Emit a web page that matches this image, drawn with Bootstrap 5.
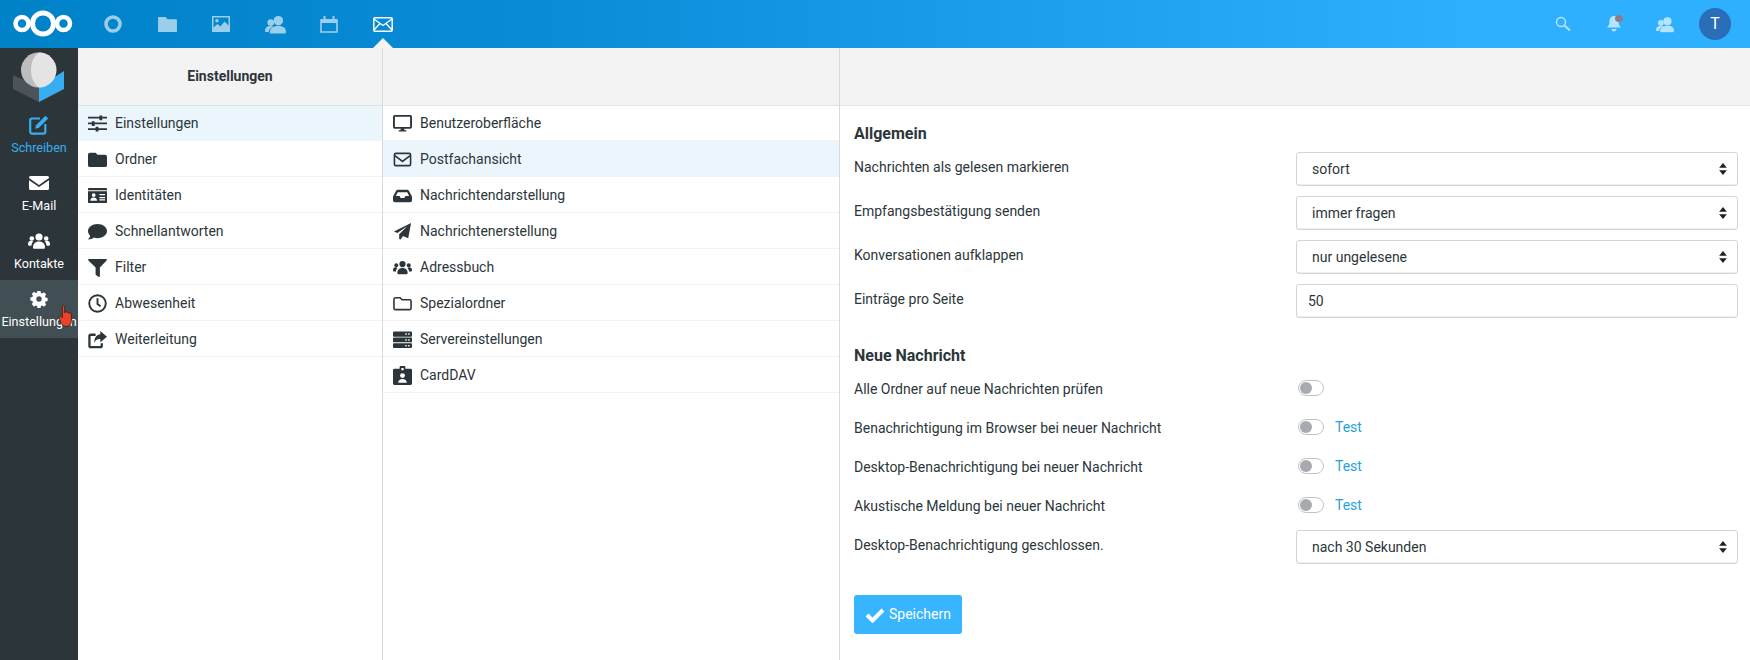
<!DOCTYPE html>
<html lang="de">
<head>
  <meta charset="UTF-8" />
  <title>Einstellungen - Mail</title>
  <link href="https://cdn.jsdelivr.net/npm/bootstrap@5.3.0/dist/css/bootstrap.min.css" rel="stylesheet">
  <style>
    html, body { height: 100%; }
    body { font-family: Roboto, "Liberation Sans", sans-serif; font-size: 14px; color: #2c363a; overflow: hidden; background: #fff; }
    .topbar { height: 48px; background: linear-gradient(90deg, #0082c9 0%, #0a8bd6 30%, #2eb0ff 85%, #2eb0ff 100%); }
    .top-logo { width: 78px; padding-left: 12px; }
    .top-apps { gap: 0; margin-left: 8px; }
    .top-app { width: 54px; height: 48px; display: flex; align-items: center; justify-content: center; color: #fff; opacity: .6; position: relative; }
    .top-app.is-on { opacity: 1; }
    .top-caret { position: absolute; left: 50%; bottom: 0; margin-left: -10px; border: 10px solid transparent; border-top: 0; border-bottom-color: #f4f4f4; }
    .top-right { gap: 0; padding-right: 19px; }
    .top-tool { width: 51px; display: flex; justify-content: center; color: #fff; opacity: .65; position: relative; }
    .bell-dot { position: absolute; left: 27px; top: -1px; width: 8px; height: 7px; border-radius: 50%; background: #c0614f; }
    .avatar { width: 32px; height: 32px; border-radius: 50%; background: #2a6eb8; color: #fff; font-size: 16px; display: flex; align-items: center; justify-content: center; margin-left: 9px; }
    .app-main { height: 612px; }
    .side-task { width: 78px; background: #2c363a; flex: none; overflow: hidden; position: relative; }
    .side-logo { height: 58px; display: flex; justify-content: center; padding-top: 3px; }
    .side-item { height: 58px; display: flex; flex-direction: column; align-items: center; padding-top: 9px; color: #fff; font-size: 12.6px; white-space: nowrap; text-decoration: none; }
    .side-item svg { margin-bottom: 4px; }
    .side-item.is-compose { color: #37aef0; }
    .side-item.is-active { background: #414e53; padding-top: 10px; }
    .side-item.is-active svg { margin-bottom: 5px; }
    .hand-cursor { position: absolute; left: 58px; top: 257px; }
    .pane-one { width: 305px; }
    .pane-two { width: 457px; }
    .pane-one, .pane-two { flex: none; border-right: 1px solid #d4dae0; }
    .pane-three { flex: 1; min-width: 0; }
    .pane-head { height: 58px; background: #f3f3f3; border-bottom: 1px solid #dfe3e6; display: flex; align-items: center; justify-content: center; font-weight: 700; padding-bottom: 1px; }
    .list-item { height: 36px; display: flex; align-items: center; padding: 2px 0 0 10px; border-bottom: 1px solid #f2f2f2; color: #2c363a; text-decoration: none; }
    .list-item:first-child { height: 35px; padding-top: 0; }
    .list-item.is-on { background: #ebf6fc; border-bottom-color: #ebf6fc; }
    .list-ico { width: 19px; height: 19px; margin-right: 8px; flex: none; color: #2c363a; }
    .form-pane { padding: 18px 12px 0 14px; }
    .form-head { font-size: 16px; font-weight: 700; line-height: 20px; }
    .new-head { margin-top: 28px; margin-bottom: 2px; }
    .form-line { display: flex; justify-content: space-between; margin-bottom: 10px; }
    .form-line > label { padding-top: 5px; line-height: 20px; }
    .select-after { margin-top: 6px; }
    .form-field { width: 442px; flex: none; }
    .form-field .form-select, .form-field .form-control { height: 34px; font-size: 14px; color: #2c363a; border: 1px solid #d4d4d4; border-radius: 3px; box-shadow: inset 0 -1px 0 #eee; }
    .form-field .form-select { padding: 4px 30px 4px 15px; background-size: 8px 12px; background-position: right 10px center;
      background-image: url("data:image/svg+xml,%3csvg xmlns='http://www.w3.org/2000/svg' viewBox='0 0 9 14'%3e%3cpath fill='%23222' d='M4.5 0 9 5.5H0zM4.5 14 0 8.500h9z'/%3e%3c/svg%3e"); }
    .form-field .form-control { padding: 4px 11px; }
    .switch-line { height: 39px; display: flex; align-items: center; justify-content: space-between; }
    .switch-line > label { padding-top: 3px; }
    .switch-line .form-switch { padding: 0; min-height: 0; margin: 0; display: flex; align-items: center; }
    .switch-line .form-check-input { width: 26px; height: 16px; margin: 0 0 0 2px; float: none; border: 1px solid #c3c3c3; box-shadow: none;
      background-size: 14px 14px; background-position: left center; background-image: url("data:image/svg+xml,%3csvg xmlns='http://www.w3.org/2000/svg' viewBox='0 0 14 14'%3e%3ccircle cx='7' cy='7' r='6' fill='%23a7abb0'/%3e%3c/svg%3e"); }
    .test-link { color: #1fa4d8; text-decoration: none; margin-left: 11px; padding-top: 1px; }
    .save-btn { width: 108px; height: 39px; margin-top: 31px; padding: 0; background: #37b5ff; border: 0; border-radius: 3px; color: #fff; font-size: 14px; display: flex; align-items: center; justify-content: center; gap: 4px; }
  </style>
</head>
<body>
  <svg width="0" height="0" class="d-none">
    <symbol id="i-sliders" viewBox="0 0 20 20"><path fill="currentColor" d="M0 3h20v1.800H0zM0 9h20v1.800H0zM0 15h20v1.800H0z"/><path fill="currentColor" d="M12 1.500h3v5h-3zM4 7.500h3v5H4zM8 13.500h3v5H8z"/></symbol>
    <symbol id="i-folder" viewBox="0 0 20 20"><path fill="currentColor" d="M2 3h6l2 2h8a2 2 0 0 1 2 2v9a2 2 0 0 1-2 2H2a2 2 0 0 1-2-2V5a2 2 0 0 1 2-2z"/></symbol>
    <symbol id="i-card" viewBox="0 0 20 20"><path fill="currentColor" fill-rule="evenodd" d="M1 2h18a1 1 0 0 1 1 1v14a1 1 0 0 1-1 1H1a1 1 0 0 1-1-1V3a1 1 0 0 1 1-1zM0 4.500v1h20v-1zM6 7.500a2 2 0 1 0 0 4 2 2 0 0 0 0-4zM2.500 15.500h7c0-2-1.500-3.300-3.500-3.300s-3.500 1.300-3.500 3.300zM12 8.500v1.300h6V8.500zM12 11.500v1.300h6v-1.300zM12 14v1.300h6V14z"/></symbol>
    <symbol id="i-comment" viewBox="0 0 20 20"><path fill="currentColor" d="M10 2c5.500 0 10 3.400 10 7.500S15.500 17 10 17c-1.300 0-2.500-.2-3.700-.6C5 17.500 2.800 18.500 0 18.500c1.300-1.300 2-2.700 2.300-4C.8 13 0 11.300 0 9.500 0 5.400 4.500 2 10 2z"/></symbol>
    <symbol id="i-filter" viewBox="0 0 20 20"><path fill="currentColor" d="M1 1h18c.8 0 1.200 1 .6 1.600L12.500 10v9.300c0 .6-.6.900-1.100.6L8 17.500V10L.4 2.600C-.2 2 .2 1 1 1z"/></symbol>
    <symbol id="i-clock" viewBox="0 0 20 20"><circle cx="10" cy="10" r="8.700" fill="none" stroke="currentColor" stroke-width="2"/><path fill="none" stroke="currentColor" stroke-width="2" d="M10 4.500V10.500l3.200 2.500"/></symbol>
    <symbol id="i-share" viewBox="0 0 20 20"><path fill="none" stroke="currentColor" stroke-width="2.400" d="M8 5H3a1.500 1.500 0 0 0-1.500 1.500v10A1.500 1.500 0 0 0 3 18h10a1.500 1.500 0 0 0 1.500-1.500V14"/><path fill="currentColor" d="M13 1l7 6-7 6V9.500c-3.500 0-5.500 1-6 4.500-1-5 1.500-9 6-9.500z"/></symbol>
    <symbol id="i-desktop" viewBox="0 0 20 20"><path fill="none" stroke="currentColor" stroke-width="2" d="M1.800 2h16.400a.8.800 0 0 1 .8.800v11a.8.800 0 0 1-.8.800H1.800a.8.800 0 0 1-.8-.8v-11a.8.800 0 0 1 .8-.8z"/><path fill="currentColor" d="M8 15h4v2h2v1.500H6V17h2z"/></symbol>
    <symbol id="i-mail-o" viewBox="0 0 20 20"><rect x="1.500" y="3.500" width="17" height="13" rx="1.500" fill="none" stroke="currentColor" stroke-width="1.700"/><path fill="none" stroke="currentColor" stroke-width="1.700" d="M2 6l8 6 8-6"/></symbol>
    <symbol id="i-inbox" viewBox="0 0 20 20"><path fill="currentColor" fill-rule="evenodd" d="M5 4h10c.7 0 1.300.3 1.700 1L20 11v4a2 2 0 0 1-2 2H2a2 2 0 0 1-2-2v-4l3.300-6c.4-.7 1-1 1.700-1zM5 6.500 3 10.500h4l1 2h4l1-2h4l-2-4z"/></symbol>
    <symbol id="i-plane" viewBox="0 0 20 20"><path fill="currentColor" d="M19 1l-3 16-5.500-2.300L8 18.500l-1.500-.5v-5L15 4.500 4.500 11.500 1 10z"/></symbol>
    <symbol id="i-users" viewBox="0 0 22 20"><circle cx="11" cy="6" r="3.600" fill="currentColor"/><circle cx="3.800" cy="7.500" r="2.300" fill="currentColor"/><circle cx="18.200" cy="7.500" r="2.300" fill="currentColor"/><path fill="currentColor" d="M5 16.500c0-3.500 2-6 6-6s6 2.500 6 6c0 .8-.6 1.300-1.300 1.300H6.300C5.600 17.800 5 17.300 5 16.500zM0 13c0-2 1-3.300 3-3.300 1 0 1.700.3 2.300.8-1 1-1.800 2.500-1.900 4.200H1c-.6 0-1-.5-1-1.700zM22 13c0-2-1-3.300-3-3.300-1 0-1.700.3-2.300.8 1 1 1.800 2.500 1.900 4.200H21c.6 0 1-.5 1-1.700z"/></symbol>
    <symbol id="i-folder-o" viewBox="0 0 20 20"><path fill="none" stroke="currentColor" stroke-width="1.700" d="M2.500 4h5l2 2h8a1.500 1.500 0 0 1 1.500 1.500V15a1.500 1.500 0 0 1-1.500 1.500h-15A1.500 1.500 0 0 1 1 15V5.500A1.500 1.500 0 0 1 2.500 4z"/></symbol>
    <symbol id="i-server" viewBox="0 0 20 20"><path fill="currentColor" fill-rule="evenodd" d="M1 1.500h18a1 1 0 0 1 1 1v3.500a1 1 0 0 1-1 1H1a1 1 0 0 1-1-1V2.500a1 1 0 0 1 1-1zM1 8h18a1 1 0 0 1 1 1v3a1 1 0 0 1-1 1H1a1 1 0 0 1-1-1V9a1 1 0 0 1 1-1zM1 14h18a1 1 0 0 1 1 1v3a1 1 0 0 1-1 1H1a1 1 0 0 1-1-1v-3a1 1 0 0 1 1-1zM13 3.500v1.500h1.500V3.500zM16 3.500v1.500h1.500V3.500zM13 9.800v1.500h1.500V9.800zM16 9.800v1.500h1.500V9.800zM13 15.800v1.500h1.500v-1.500zM16 15.800v1.500h1.500v-1.500z"/></symbol>
    <symbol id="i-badge" viewBox="0 0 20 20"><path fill="currentColor" fill-rule="evenodd" d="M1.500 3H7V1.200C7 .5 7.500 0 8.200 0h3.600C12.500 0 13 .5 13 1.200V3h5.500A1.500 1.500 0 0 1 20 4.500v14a1.500 1.500 0 0 1-1.500 1.500h-17A1.500 1.500 0 0 1 0 18.500v-14A1.500 1.500 0 0 1 1.500 3zM10 7.500a2.600 2.600 0 1 0 0 5.200 2.600 2.600 0 0 0 0-5.200zM5.500 17.500h9c0-2.500-2-3.800-4.500-3.800s-4.500 1.300-4.500 3.800zM8.800 2v2.500h2.400V2z"/></symbol>
    <symbol id="i-contacts" viewBox="0 0 22 20"><circle cx="14" cy="6" r="5" fill="currentColor"/><circle cx="6" cy="8" r="3.500" fill="currentColor"/><path fill="currentColor" d="M5 19c0-5 3-7.500 9-7.500s8 2.500 8 6c0 1-.5 2-1.500 2H6c-.5 0-1 0-1-.5zM0 17c0-3.500 2-5.500 6-5.500 1 0 2 .2 2.500.5C5.500 13.500 4 15.500 3.800 18H1c-.6 0-1-.4-1-1z"/></symbol>
  </svg>

  <nav class="topbar d-flex align-items-center justify-content-between">
    <div class="d-flex align-items-center">
      <a class="top-logo d-block" href="#">
        <svg width="62" height="28" viewBox="0 0 62 28" class="d-block">
          <g fill="none" stroke="#fff"><circle cx="10" cy="13.500" r="6.500" stroke-width="4.500"/><circle cx="31" cy="13.500" r="10.500" stroke-width="5"/><circle cx="51.500" cy="13.500" r="6.500" stroke-width="4.500"/></g>
        </svg>
      </a>
      <div class="top-apps d-flex">
        <a class="top-app" href="#"><svg width="18" height="18" viewBox="0 0 18 18"><circle cx="9" cy="9" r="7" fill="none" stroke="currentColor" stroke-width="3.600"/></svg></a>
        <a class="top-app" href="#"><svg width="19" height="17" viewBox="0 0 20 18"><path fill="currentColor" d="M1 1h7l2 2.500h9a1 1 0 0 1 1 1V17H0V2a1 1 0 0 1 1-1z"/></svg></a>
        <a class="top-app" href="#"><svg width="18" height="16" viewBox="0 0 18 16"><path fill="currentColor" fill-rule="evenodd" d="M0 0h18v16H0zM1.500 1.500v10l4-3.500 3 2.500 4-5 4 4v-8zM5 3a1.800 1.800 0 1 1 0 3.600A1.800 1.800 0 0 1 5 3z"/></svg></a>
        <a class="top-app" href="#"><svg width="21" height="19" viewBox="0 0 22 20"><use href="#i-contacts"/></svg></a>
        <a class="top-app" href="#"><svg width="18" height="18" viewBox="0 0 18 18"><path fill="none" stroke="currentColor" stroke-width="1.600" d="M1 5h16v12H1z"/><path fill="currentColor" d="M1 4h16v4H1zM3.500 1h2v4h-2zM12.500 1h2v4h-2z"/></svg></a>
        <a class="top-app is-on" href="#"><svg width="20" height="15" viewBox="0 0 20 15"><rect x=".8" y=".8" width="18.400" height="13.400" rx="1" fill="none" stroke="currentColor" stroke-width="1.500"/><path fill="none" stroke="currentColor" stroke-width="1.300" d="M1 2l9 6.500L19 2M1 13l6-6.500M19 13l-6-6.500"/></svg><span class="top-caret"></span></a>
      </div>
    </div>
    <div class="top-right d-flex align-items-center">
      <a class="top-tool" href="#"><svg width="16" height="16" viewBox="0 0 16 16"><circle cx="6" cy="6" r="4.500" fill="none" stroke="currentColor" stroke-width="1.500"/><path stroke="currentColor" stroke-width="2" d="M9.500 9.500l5.500 5"/></svg></a>
      <a class="top-tool" href="#"><svg width="14" height="16" viewBox="0 0 14 16"><path fill="currentColor" d="M7 0c3 0 4.500 2.500 4.500 5.500 0 3 1 4.500 2.500 6H0c1.500-1.500 2.500-3 2.500-6C2.500 2.500 4 0 7 0zM4.500 13h5c0 1.500-1 2.500-2.500 2.500S4.500 14.500 4.500 13z"/></svg><span class="bell-dot"></span></a>
      <a class="top-tool" href="#"><svg width="18" height="17" viewBox="0 0 22 20"><use href="#i-contacts"/></svg></a>
      <div class="avatar">T</div>
    </div>
  </nav>

  <div class="app-main d-flex">
    <aside class="side-task">
      <div class="side-logo">
        <svg width="52" height="52" viewBox="0 0 52 52">
          <path fill="#4a5459" d="M0 24l26 12v15L0 38z"/>
          <path fill="#37aef0" d="M51 20L26 36v15l25-13z"/>
          <circle cx="25.500" cy="19" r="17.500" fill="#bdbdbd"/>
          <path fill="#e4e4e4" d="M26 1.500a17.500 17.500 0 0 1 0 35c-5-3-8-10-8-17.500s3-14.500 8-17.500z"/>
        </svg>
      </div>
      <a class="side-item is-compose" href="#"><svg width="20" height="20" viewBox="0 0 20 20"><path fill="none" stroke="currentColor" stroke-width="2.200" d="M11 3.500H3A1.800 1.800 0 0 0 1.200 5.300v11.500A1.800 1.800 0 0 0 3 18.600h11.500a1.800 1.800 0 0 0 1.800-1.800V9"/><path fill="currentColor" d="M16.500.8l2.700 2.700-9.500 9.500-3.500.8.800-3.500z"/></svg>Schreiben</a>
      <a class="side-item" href="#"><svg width="20" height="20" viewBox="0 0 20 20"><path fill="currentColor" d="M1.500 3h17A1.500 1.500 0 0 1 20 4.500v.6l-10 7-10-7v-.6A1.500 1.500 0 0 1 1.500 3zM0 7.200l10 6.800 10-6.800v8.300a1.500 1.500 0 0 1-1.500 1.500h-17A1.500 1.500 0 0 1 0 15.500z"/></svg>E-Mail</a>
      <a class="side-item" href="#"><svg width="22" height="20" viewBox="0 0 22 20"><use href="#i-users"/></svg>Kontakte</a>
      <a class="side-item is-active" href="#"><svg width="18" height="18" viewBox="0 0 20 20"><path fill="currentColor" fill-rule="evenodd" d="M8.300 1h3.400l.5 2.300 1.400.6 2-1.300 2.400 2.400-1.300 2 .6 1.400 2.300.5v3.400l-2.300.5-.6 1.400 1.300 2-2.400 2.400-2-1.300-1.400.6-.5 2.300H8.300l-.5-2.300-1.400-.6-2 1.300L2 15.600l1.300-2-.6-1.400L.4 11.700V8.300l2.300-.5.6-1.400-1.300-2L4.400 2l2 1.300 1.400-.6zM10 7a3 3 0 1 0 0 6 3 3 0 0 0 0-6z"/></svg>Einstellungen</a>
      <svg class="hand-cursor" width="17" height="23" viewBox="0 0 15 22"><path fill="#e8442a" stroke="#3a1a12" stroke-width=".8" d="M3.500 1.500c0-1.300 2.300-1.300 2.300 0v6l.6-1c1-.6 1.800 0 1.900.8.800-.6 1.800-.2 1.900.6.800-.5 2-.1 2 1v5.500c0 3-1.500 6-5 6-2.500 0-3.800-1-5-3L.5 12c-.8-1.300.8-2.400 1.800-1.300l1.200 1.500z"/></svg>
    </aside>

    <section class="pane-one">
      <div class="pane-head">Einstellungen</div>
      <div>
        <a class="list-item is-on" href="#"><svg class="list-ico"><use href="#i-sliders"/></svg>Einstellungen</a>
        <a class="list-item" href="#"><svg class="list-ico"><use href="#i-folder"/></svg>Ordner</a>
        <a class="list-item" href="#"><svg class="list-ico"><use href="#i-card"/></svg>Identitäten</a>
        <a class="list-item" href="#"><svg class="list-ico"><use href="#i-comment"/></svg>Schnellantworten</a>
        <a class="list-item" href="#"><svg class="list-ico"><use href="#i-filter"/></svg>Filter</a>
        <a class="list-item" href="#"><svg class="list-ico"><use href="#i-clock"/></svg>Abwesenheit</a>
        <a class="list-item" href="#"><svg class="list-ico"><use href="#i-share"/></svg>Weiterleitung</a>
      </div>
    </section>

    <section class="pane-two">
      <div class="pane-head"></div>
      <div>
        <a class="list-item" href="#"><svg class="list-ico"><use href="#i-desktop"/></svg>Benutzeroberfläche</a>
        <a class="list-item is-on" href="#"><svg class="list-ico"><use href="#i-mail-o"/></svg>Postfachansicht</a>
        <a class="list-item" href="#"><svg class="list-ico"><use href="#i-inbox"/></svg>Nachrichtendarstellung</a>
        <a class="list-item" href="#"><svg class="list-ico"><use href="#i-plane"/></svg>Nachrichtenerstellung</a>
        <a class="list-item" href="#"><svg class="list-ico"><use href="#i-users"/></svg>Adressbuch</a>
        <a class="list-item" href="#"><svg class="list-ico"><use href="#i-folder-o"/></svg>Spezialordner</a>
        <a class="list-item" href="#"><svg class="list-ico"><use href="#i-server"/></svg>Servereinstellungen</a>
        <a class="list-item" href="#"><svg class="list-ico"><use href="#i-badge"/></svg>CardDAV</a>
      </div>
    </section>

    <section class="pane-three">
      <div class="pane-head"></div>
      <form class="form-pane">
        <div class="form-head mb-2">Allgemein</div>
        <div class="form-line">
          <label>Nachrichten als gelesen markieren</label>
          <div class="form-field"><select class="form-select"><option>sofort</option></select></div>
        </div>
        <div class="form-line">
          <label>Empfangsbestätigung senden</label>
          <div class="form-field"><select class="form-select"><option>immer fragen</option></select></div>
        </div>
        <div class="form-line">
          <label>Konversationen aufklappen</label>
          <div class="form-field"><select class="form-select"><option>nur ungelesene</option></select></div>
        </div>
        <div class="form-line">
          <label>Einträge pro Seite</label>
          <div class="form-field"><input type="text" class="form-control" value="50"></div>
        </div>

        <div class="form-head new-head">Neue Nachricht</div>
        <div class="switch-line">
          <label>Alle Ordner auf neue Nachrichten prüfen</label>
          <div class="form-field form-check form-switch"><input class="form-check-input" type="checkbox"></div>
        </div>
        <div class="switch-line">
          <label>Benachrichtigung im Browser bei neuer Nachricht</label>
          <div class="form-field form-check form-switch"><input class="form-check-input" type="checkbox"><a class="test-link" href="#">Test</a></div>
        </div>
        <div class="switch-line">
          <label>Desktop-Benachrichtigung bei neuer Nachricht</label>
          <div class="form-field form-check form-switch"><input class="form-check-input" type="checkbox"><a class="test-link" href="#">Test</a></div>
        </div>
        <div class="switch-line">
          <label>Akustische Meldung bei neuer Nachricht</label>
          <div class="form-field form-check form-switch"><input class="form-check-input" type="checkbox"><a class="test-link" href="#">Test</a></div>
        </div>
        <div class="form-line select-after">
          <label>Desktop-Benachrichtigung geschlossen.</label>
          <div class="form-field"><select class="form-select"><option>nach 30 Sekunden</option></select></div>
        </div>

        <button type="button" class="btn save-btn"><svg width="20" height="16" viewBox="0 0 20 16"><path fill="none" stroke="#fff" stroke-width="4" d="M2 8l5.500 5.500L18 3"/></svg>Speichern</button>
      </form>
    </section>
  </div>
  <script src="https://cdn.jsdelivr.net/npm/bootstrap@5.3.0/dist/js/bootstrap.bundle.min.js"></script>
</body>
</html>
